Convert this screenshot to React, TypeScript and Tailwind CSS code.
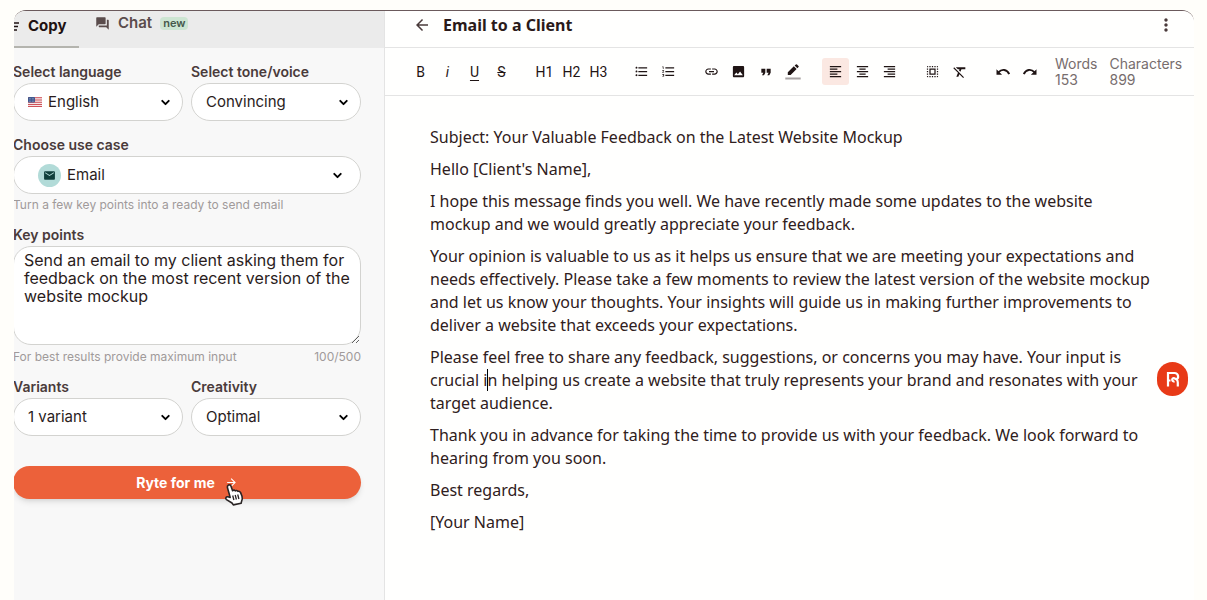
import type { ReactNode } from "react";
import { ChevronDown } from "lucide-react";
import {
  MdArrowBack,
  MdArrowForward,
  MdEmail,
  MdFormatAlignCenter,
  MdFormatAlignLeft,
  MdFormatAlignRight,
  MdFormatClear,
  MdFormatListBulleted,
  MdFormatListNumbered,
  MdFormatQuote,
  MdForum,
  MdImage,
  MdLink,
  MdMoreVert,
  MdSelectAll,
} from "react-icons/md";
import clsx from "clsx";

type Tool = { label: string; icon: ReactNode; active?: boolean };

const toolGroups: Tool[][] = [
  [
    { label: "Bold", icon: "B" },
    { label: "Italic", icon: <span className="italic">i</span> },
    {
      label: "Underline",
      icon: <span className="underline underline-offset-3">U</span>,
    },
    { label: "Strikethrough", icon: <span className="line-through">S</span> },
  ],
  [
    { label: "Heading 1", icon: "H1" },
    { label: "Heading 2", icon: "H2" },
    { label: "Heading 3", icon: "H3" },
  ],
  [
    { label: "Bulleted list", icon: <MdFormatListBulleted size={15} /> },
    { label: "Numbered list", icon: <MdFormatListNumbered size={15} /> },
  ],
  [
    { label: "Link", icon: <MdLink size={15} /> },
    { label: "Image", icon: <MdImage size={15} /> },
    { label: "Quote", icon: <MdFormatQuote size={16} /> },
    { label: "Highlight", icon: <Highlighter /> },
  ],
  [
    { label: "Align left", icon: <MdFormatAlignLeft size={15} />, active: true },
    { label: "Align center", icon: <MdFormatAlignCenter size={15} /> },
    { label: "Align right", icon: <MdFormatAlignRight size={15} /> },
  ],
  [
    { label: "Select all", icon: <MdSelectAll size={15} /> },
    { label: "Clear format", icon: <MdFormatClear size={16} /> },
  ],
  [
    { label: "Undo", icon: <UndoArrow /> },
    { label: "Redo", icon: <UndoArrow flipped /> },
  ],
];

function UndoArrow({ flipped = false }: { flipped?: boolean }) {
  return (
    <svg viewBox="0 0 14 8" className={clsx("h-2 w-3.5", flipped && "-scale-x-100")}>
      <path d="M.5 1.200v5.600h5.600z" fill="currentColor" />
      <path
        d="M2.600 4.200C5.800.7 11 1.200 13.200 6"
        fill="none"
        stroke="currentColor"
        strokeWidth="1.900"
      />
    </svg>
  );
}

function Highlighter() {
  return (
    <svg viewBox="0 0 16 16" className="size-4">
      <path
        d="M2.800 8.200v2.800h2.800l6-6-2.800-2.800zM13.500 3a.8.8 0 0 0 0-1.100L12 .4a.8.8 0 0 0-1.100 0L9.600 1.500l2.800 2.800z"
        fill="currentColor"
      />
      <path d="M.3 14.500h15.400" stroke="#a8a3a3" strokeWidth="2" />
    </svg>
  );
}

function Flag() {
  return (
    <svg viewBox="0 0 14 10" className="h-[10px] w-[14px]">
      <rect width="14" height="10" rx="1" fill="#f4e6e6" />
      <path
        d="M0 .7h14M0 3h14M0 5.300h14M0 7.500h14M0 9.500h14"
        stroke="#d0525a"
        strokeWidth="1"
      />
      <rect width="7" height="5.500" rx="1" fill="#41598f" />
      <path
        d="M1 1.500h5M1 3h5M1 4.500h5"
        stroke="#c9d2e6"
        strokeWidth=".5"
        strokeDasharray=".6 .9"
      />
    </svg>
  );
}

function Pointer() {
  return (
    <svg viewBox="0 0 20 24" className="h-6 w-5">
      <path
        d="M4.500 2c1.200-.5 2.200.2 2.600 1.400l1.500 4.300c.7-.8 2-.8 2.700.2.8-.7 2.100-.5 2.600.5 1-.5 2.200.1 2.700 1.200l1.400 3.700c.5 2 .4 3.200-.3 4.600l-.6 2.300-7.800 1.700-1.300-1.900-5.500-3.400c-1.600-1.300-.4-3.200 1.300-2.800l2.400.6-2.800-9.900c-.3-1.100.2-2 1.100-2.500z"
        fill="#fff"
        stroke="#2a2424"
        strokeWidth="1.600"
        strokeLinejoin="round"
      />
      <path
        d="M8.700 12.500l1.200 4.500M11.200 12l1.200 4.500M13.700 11.500l1.200 4.500"
        stroke="#2a2424"
        strokeWidth="1.300"
      />
    </svg>
  );
}

function Label({ htmlFor, children }: { htmlFor: string; children: string }) {
  return (
    <label
      htmlFor={htmlFor}
      className="block text-sm leading-4 font-semibold text-[#4a3b3b]"
    >
      {children}
    </label>
  );
}

type PickerProps = {
  id: string;
  label: string;
  value: string;
  icon?: ReactNode;
  inset?: string;
};

function Picker({
  id,
  label,
  value,
  icon,
  inset = "pl-3.5 pr-2.5",
}: PickerProps) {
  return (
    <div className="space-y-[3px]">
      <Label htmlFor={id}>{label}</Label>
      <div
        className={clsx(
          "flex h-[38px] items-center gap-1.5 rounded-full border border-[#d3d3d0] bg-white",
          inset,
        )}
      >
        {icon}
        <select
          id={id}
          className="min-w-0 flex-1 appearance-none bg-transparent text-[15px] text-[#2a1c1c] outline-none"
        >
          <option>{value}</option>
        </select>
        <ChevronDown
          size={13}
          strokeWidth={3.5}
          className="pointer-events-none shrink-0"
        />
      </div>
    </div>
  );
}

function Sidebar() {
  return (
    <aside className="w-[371px] shrink-0 border-r border-[#e4e4e4] bg-[#f8f8f8]">
      <nav className="flex h-[37px] items-stretch gap-4 bg-[#ebebeb]">
        <button className="flex w-[65px] items-center border-b-2 border-[#b4b4ae] text-[15px] font-bold text-[#1f1212]">
          <svg viewBox="0 0 14 14" className="-mt-1 size-3.5">
            <path
              d="M0 3h5M0 6.500h4M0 10h3"
              stroke="currentColor"
              strokeWidth="1.500"
            />
          </svg>
          <span className="-mt-1">Copy</span>
        </button>
        <button className="flex items-center gap-2 pb-3 text-[15px] font-semibold text-[#5a4c4c]">
          <MdForum size={15} />
          Chat
          <span className="rounded bg-[#cde5d2] px-[3px] text-[11px] leading-[13px] text-[#45584b]">
            new
          </span>
        </button>
      </nav>

      {/* The form bleeds one pixel under the rounded frame */}
      <form className="-ml-px pt-4 pr-[23px]">
        <div className="grid grid-cols-2 gap-2">
          <Picker
            id="language"
            label="Select language"
            value="English"
            icon={<Flag />}
          />
          <Picker id="tone" label="Select tone/voice" value="Convincing" />
        </div>

        <div className="mt-4">
          <Picker
            id="use-case"
            label="Choose use case"
            value="Email"
            inset="pl-6 pr-4"
            icon={
              <span className="flex size-[23px] items-center justify-center rounded-full bg-[#b2dbd8] text-[#0f3f3b]">
                <MdEmail size={13} />
              </span>
            }
          />
        </div>
        <p className="mt-[3px] text-xs leading-4 text-[#a09a9a]">
          Turn a few key points into a ready to send email
        </p>

        <div className="mt-3.5 space-y-[3px]">
          <Label htmlFor="key-points">Key points</Label>
          <textarea
            id="key-points"
            defaultValue="Send an email to my client asking them for feedback on the most recent version of the website mockup"
            className="block h-[99px] w-full resize-y rounded-[18px] border border-[#d3d3d0] bg-white py-1 pr-1 pl-2.5 text-base leading-[18px] text-[#2a1c1c] outline-none"
          />
        </div>
        <div className="mt-1 flex justify-between text-xs leading-4 text-[#a09a9a]">
          <span>For best results provide maximum input</span>
          <span>100/500</span>
        </div>

        <div className="mt-3.5 grid grid-cols-2 gap-2">
          <Picker id="variants" label="Variants" value="1 variant" />
          <Picker id="creativity" label="Creativity" value="Optimal" />
        </div>

        <button
          type="button"
          className="relative mt-[30px] flex h-[33px] w-full items-center justify-center gap-2.5 rounded-full bg-[#ec613a] text-sm font-bold text-white shadow-md"
        >
          Ryte for me
          <MdArrowForward size={13} />
          <span className="absolute top-[17px] left-[211px]">
            <Pointer />
          </span>
        </button>
      </form>
    </aside>
  );
}

function Toolbar() {
  return (
    <div className="flex h-12 items-center gap-4 border-b border-[#e4e4e4] pl-[22px] text-black">
      {toolGroups.map((group) => (
        <div key={group[0].label} className="flex">
          {group.map((tool) => (
            <button
              key={tool.label}
              aria-label={tool.label}
              className={clsx(
                "flex h-[27px] w-[27px] items-center justify-center rounded-[3px] font-[Roboto,sans-serif] text-sm text-[#1f1414]",
                tool.active && "bg-[#fbe8e2]",
              )}
            >
              {tool.icon}
            </button>
          ))}
        </div>
      ))}
      <dl className="-ml-1 flex gap-3 text-sm leading-4 text-[#776d6d]">
        <div>
          <dt>Words</dt>
          <dd>153</dd>
        </div>
        <div>
          <dt>Characters</dt>
          <dd>899</dd>
        </div>
      </dl>
    </div>
  );
}

function Editor() {
  return (
    <main className="relative min-w-0 flex-1 bg-[#fffffe]">
      <header className="flex h-[37px] items-center gap-3 border-b border-[#e4e4e4] pr-[18px] pb-2 pl-7 text-[#4a3b3b]">
        <button aria-label="Back">
          <MdArrowBack size={18} />
        </button>
        <h1 className="flex-1 font-['Noto_Sans',sans-serif] text-base leading-6 font-bold text-[#2a1a1a]">
          Email to a Client
        </h1>
        <button aria-label="More options">
          <MdMoreVert size={20} />
        </button>
      </header>
      <Toolbar />

      <article className="space-y-[9px] pt-[30px] pr-10 pl-[45px] font-['Noto_Sans',sans-serif] text-base leading-[23px] text-[#2f2020]">
        <p>Subject: Your Valuable Feedback on the Latest Website Mockup</p>
        <p>Hello [Client's Name],</p>
        <p>
          I hope this message finds you well. We have recently made some updates
          to the website mockup and we would greatly appreciate your feedback.
        </p>
        <p>
          Your opinion is valuable to us as it helps us ensure that we are
          meeting your expectations and needs effectively. Please take a few
          moments to review the latest version of the website mockup and let us
          know your thoughts. Your insights will guide us in making further
          improvements to deliver a website that exceeds your expectations.
        </p>
        <p className="relative">
          Please feel free to share any feedback, suggestions, or concerns you
          may have. Your input is crucial in helping us create a website that
          truly represents your brand and resonates with your target audience.
          {/* Text cursor */}
          <span className="absolute top-[23px] left-[57px] h-[22px] w-px bg-black" />
        </p>
        <p>
          Thank you in advance for taking the time to provide us with your
          feedback. We look forward to hearing from you soon.
        </p>
        <p>Best regards,</p>
        <p>[Your Name]</p>
      </article>

      <button
        aria-label="Open assistant"
        className="absolute top-[351px] right-1.5 flex h-[34px] w-[31px] items-center justify-center rounded-full bg-[#e83a17]"
      >
        <svg viewBox="0 0 14 16" className="h-4 w-3.5" fill="none">
          <path
            d="M2 15.500V2h6.500c4 0 4.800 5 1.800 6.300 1.200.7 1.500 1.700 1.500 3.200v4M2 9.500h2.500M8.500 10.200a1.600 1.600 0 1 1 .8-2"
            stroke="#fff"
            strokeWidth="2.200"
          />
        </svg>
      </button>
    </main>
  );
}

export default function App() {
  return (
    <div className="min-h-screen bg-[#fffefa] pt-2.5 pr-[13px] pl-3.5 font-[Inter,sans-serif]">
      <div className="flex min-h-[calc(100vh-10px)] overflow-hidden rounded-t-xl border-t border-[#6b5a5c]">
        <Sidebar />
        <Editor />
      </div>
    </div>
  );
}
